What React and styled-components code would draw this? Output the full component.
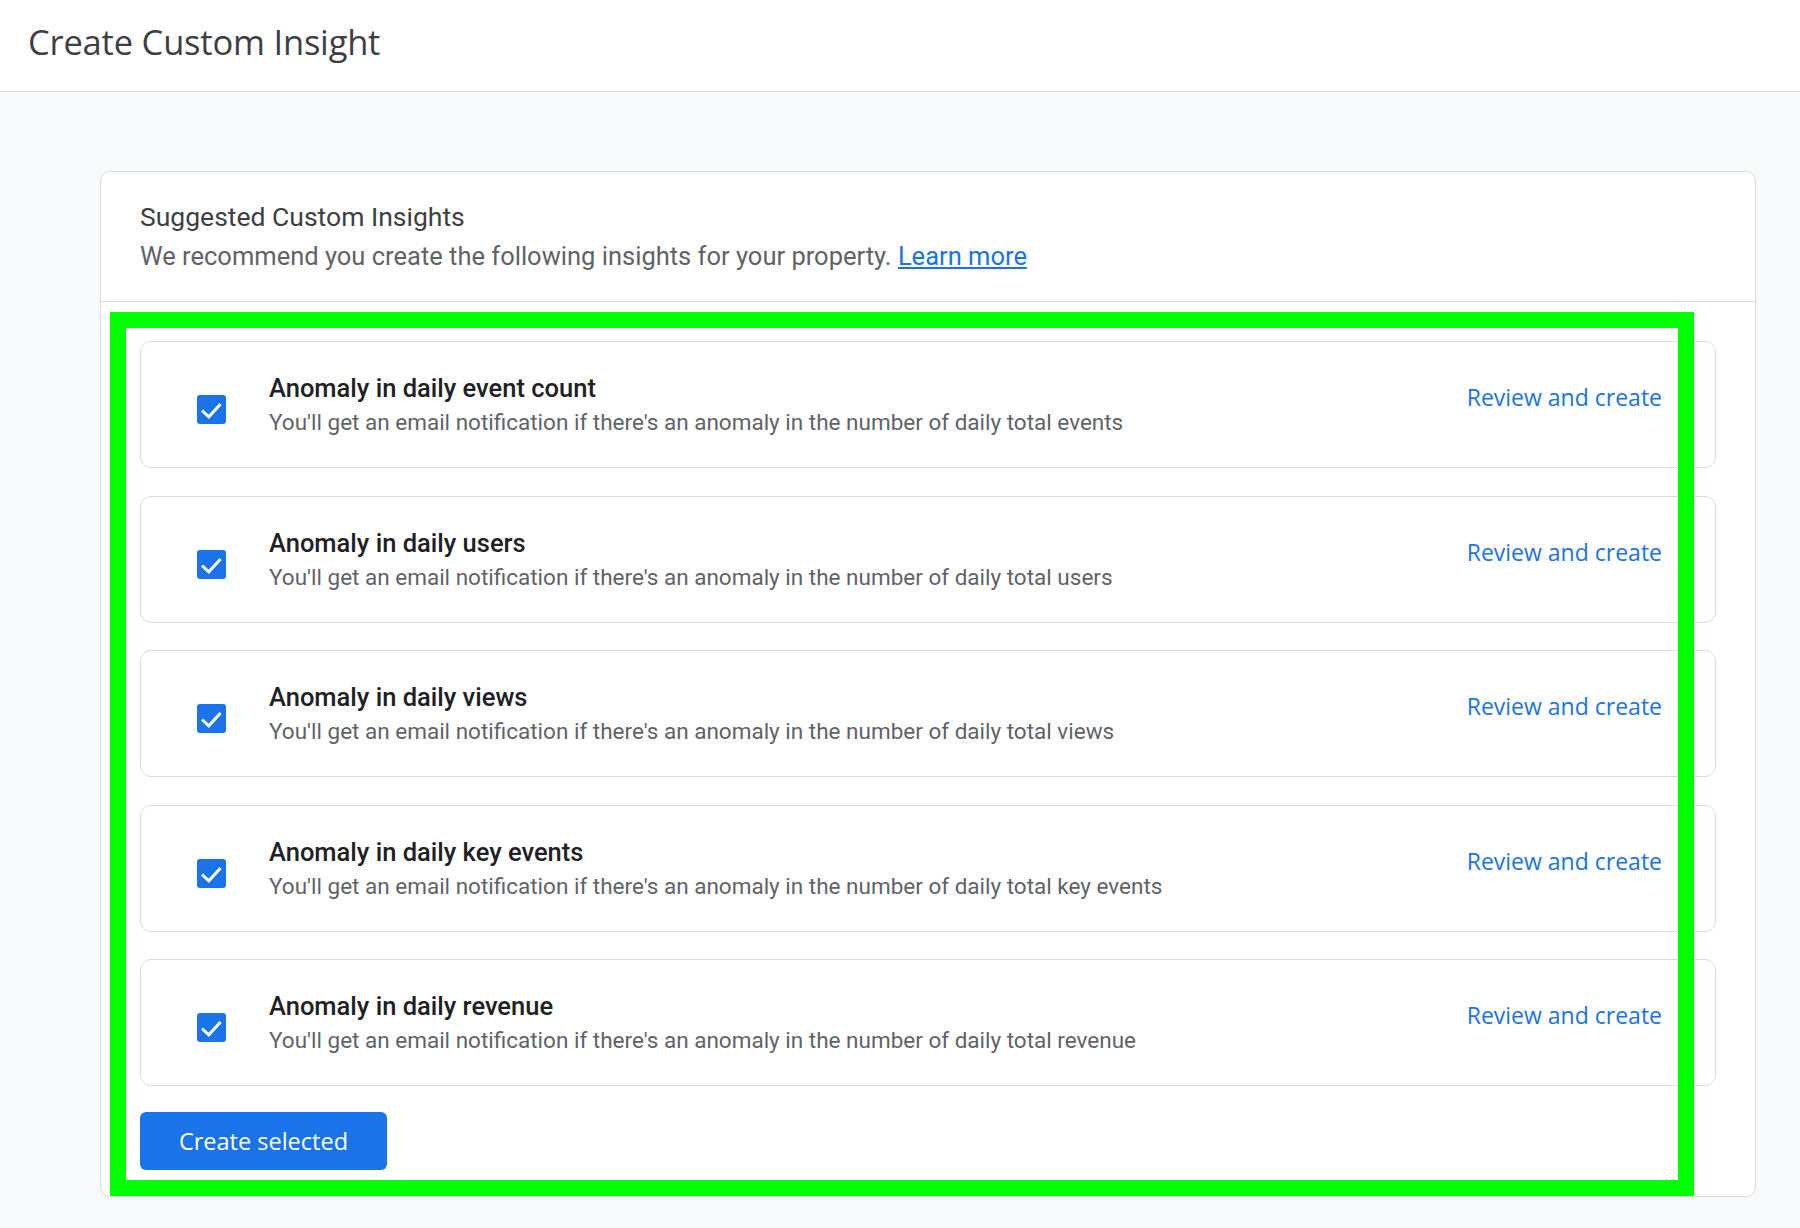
import React from 'react';
import styled, { createGlobalStyle } from 'styled-components';

const GlobalStyle = createGlobalStyle`
  body {
    margin: 0;
    background: #f8f9fa;
    font-family: Roboto, "Liberation Sans", sans-serif;
  }
`;

const Page = styled.div`
  min-height: 1228px;
  background: #f8f9fa;
`;

const Header = styled.header`
  height: 92px;
  box-sizing: border-box;
  background: #fff;
  border-bottom: 1px solid #dadce0;
  display: flex;
  align-items: center;
  padding: 0 0 9px 28px;
`;

const PageTitle = styled.h1`
  margin: 0;
  font-family: "Open Sans", Roboto, sans-serif;
  font-weight: 400;
  font-size: 34.5px;
  color: #3c4043;
  letter-spacing: -0.2px;
`;

const Main = styled.main`
  padding: 79px 44px 30px 100px;
`;

const Card = styled.section`
  position: relative;
  background: #fff;
  border: 1px solid #dadce0;
  border-radius: 10px;
`;

const CardHead = styled.div`
  padding: 29px 39px 28px;
  border-bottom: 1px solid #dadce0;
`;

const CardTitle = styled.h2`
  margin: 0;
  font-size: 26.5px;
  line-height: 32px;
  font-weight: 400;
  color: #3c4043;
`;

const CardSub = styled.p`
  margin: 6px 0 0;
  font-size: 25.5px;
  line-height: 34px;
  color: #5f6368;

  a {
    color: #1a73e8;
    text-decoration: underline;
  }
`;

const Body = styled.div`
  padding: 39px 39px 26px;
`;

const List = styled.div`
  display: flex;
  flex-direction: column;
  gap: 27.5px;
`;

const Item = styled.div`
  height: 127px;
  box-sizing: border-box;
  border: 1px solid #dadce0;
  border-radius: 11px;
  display: grid;
  grid-template-columns: 29px 1fr auto;
  column-gap: 43px;
  align-items: start;
  padding: 0 53px 0 56px;
`;

const Check = styled.span`
  margin-top: 53px;
  width: 29px;
  height: 29px;
  border-radius: 3px;
  background: #1a73e8;
  display: flex;
`;

const Text = styled.div`
  padding-top: 30px;
`;

const ItemTitle = styled.div`
  font-size: 25.5px;
  line-height: 32px;
  font-weight: 500;
  color: #202124;
`;

const ItemDesc = styled.div`
  margin-top: 2px;
  font-size: 22.5px;
  line-height: 32px;
  color: #5f6368;
`;

const ReviewLink = styled.a`
  margin-top: 39px;
  font-family: "Open Sans", Roboto, sans-serif;
  font-size: 23px;
  line-height: 32px;
  font-weight: 500;
  color: #1a73e8;
  text-decoration: none;
  cursor: pointer;
`;

const PrimaryButton = styled.button`
  margin-top: 26px;
  width: 247px;
  height: 58px;
  border: none;
  border-radius: 6px;
  background: #1a73e8;
  color: #fff;
  font-family: "Open Sans", Roboto, sans-serif;
  font-size: 23.5px;
  font-weight: 500;
  cursor: pointer;
`;

const Highlight = styled.div`
  position: absolute;
  left: 9px;
  top: 140px;
  width: 1584px;
  height: 884px;
  box-sizing: border-box;
  border: 16px solid #00ff00;
  pointer-events: none;
`;

const insights = [
  { title: 'Anomaly in daily event count', metric: 'events' },
  { title: 'Anomaly in daily users', metric: 'users' },
  { title: 'Anomaly in daily views', metric: 'views' },
  { title: 'Anomaly in daily key events', metric: 'key events' },
  { title: 'Anomaly in daily revenue', metric: 'revenue' },
];

const CheckIcon = () => (
  <svg width="29" height="29" viewBox="0 0 29 29">
    <path d="M5 15.5l6.8 6.3L23.6 9" fill="none" stroke="#fff" strokeWidth="3" />
  </svg>
);

export default function App() {
  return (
    <Page>
      <GlobalStyle />
      <Header>
        <PageTitle>Create Custom Insight</PageTitle>
      </Header>
      <Main>
        <Card>
          <CardHead>
            <CardTitle>Suggested Custom Insights</CardTitle>
            <CardSub>
              We recommend you create the following insights for your property. <a href="#">Learn more</a>
            </CardSub>
          </CardHead>
          <Body>
            <List>
              {insights.map(item => (
                <Item key={item.title}>
                  <Check>
                    <CheckIcon />
                  </Check>
                  <Text>
                    <ItemTitle>{item.title}</ItemTitle>
                    <ItemDesc>
                      You'll get an email notification if there's an anomaly in the number of daily total {item.metric}
                    </ItemDesc>
                  </Text>
                  <ReviewLink>Review and create</ReviewLink>
                </Item>
              ))}
            </List>
            <PrimaryButton>Create selected</PrimaryButton>
          </Body>
          <Highlight />
        </Card>
      </Main>
    </Page>
  );
}
